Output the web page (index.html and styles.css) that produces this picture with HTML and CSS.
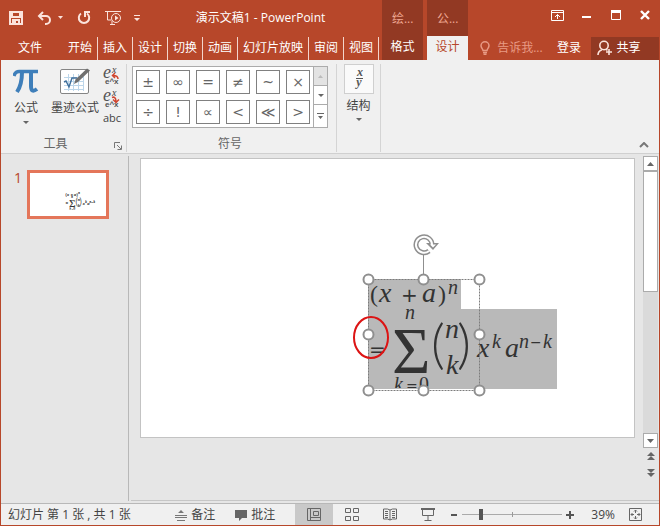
FILE: index.html
```html
<!DOCTYPE html>
<html lang="zh-CN">
<head>
    <meta charset="UTF-8">
    <meta name="viewport" content="width=device-width, initial-scale=1.0">
    <title>演示文稿1 - PowerPoint</title>
    <link rel="stylesheet" href="styles.css">
</head>
<body>
<div class="window">

    <header class="header">
        <div class="header-left">
            <div class="title-row">
                <div class="quick-access">
                    <button class="qa-button" aria-label="保存">
                        <svg width="14" height="14" viewBox="0 0 14 14" fill="none" stroke="#fbe3dc" stroke-width="2"><path d="M1 1h12v12H1zM3 1v5h8V1M4 13V9h6v4M6 10v3"/></svg>
                    </button>
                    <button class="qa-button qa-undo" aria-label="撤消">
                        <svg width="26" height="14" viewBox="0 0 26 14"><path d="M6 1L2 5l4 4M2 5h7a4 4 0 0 1 0 8H8" fill="none" stroke="#fbe3dc" stroke-width="2"/><path d="M21 5h5l-2.500 3z" fill="#fbe3dc"/></svg>
                    </button>
                    <button class="qa-button qa-redo" aria-label="重复">
                        <svg width="14" height="14" viewBox="0 0 14 14" fill="none" stroke="#fbe3dc" stroke-width="2"><path d="M4 2.500A5.200 5.200 0 1 0 10 2.500M8 6V1h5"/></svg>
                    </button>
                    <button class="qa-button qa-show" aria-label="从头开始">
                        <svg width="17" height="16" viewBox="0 0 17 16" fill="none" stroke="#fbe3dc"><path d="M0 1.500h16M2.500 2v8h4M5 14.500h5M7 11v3"/><circle cx="11" cy="8" r="4.500"/><path d="M10 5.500v5l3.500-2.500z" fill="#fbe3dc" stroke="none"/></svg>
                    </button>
                    <button class="qa-button" aria-label="自定义快速访问工具栏">
                        <svg width="6" height="7" viewBox="0 0 6 7" fill="#fbe3dc"><path d="M0 0h6v1H0zM0 3h6L3 6z"/></svg>
                    </button>
                </div>
                <h1 class="title">演示文稿1 - PowerPoint</h1>
            </div>
            <nav class="tabs">
                <a href="#" class="tab tab-file">文件</a>
                <a href="#" class="tab">开始</a>
                <a href="#" class="tab">插入</a>
                <a href="#" class="tab">设计</a>
                <a href="#" class="tab">切换</a>
                <a href="#" class="tab">动画</a>
                <a href="#" class="tab">幻灯片放映</a>
                <a href="#" class="tab">审阅</a>
                <a href="#" class="tab">视图</a>
            </nav>
        </div>
        <div class="context">
            <span class="context-name">绘...</span>
            <a href="#" class="context-tab">格式</a>
        </div>
        <div class="context">
            <span class="context-name">公...</span>
            <a href="#" class="context-tab active">设计</a>
        </div>
        <div class="header-right">
            <div class="window-buttons">
                <button aria-label="功能区显示选项">
                    <svg width="13" height="11" viewBox="0 0 13 11" fill="none" stroke="#fff"><path d="M.5.5h12v10H.5zM0 2.500h13M6.500 4.500V9M4 7l2.500-2.500L9 7"/></svg>
                </button>
                <button aria-label="最小化">
                    <svg width="10" height="10" viewBox="0 0 10 10"><path d="M0 6h9v2H0z" fill="#fff"/></svg>
                </button>
                <button aria-label="最大化">
                    <svg width="10" height="10" viewBox="0 0 10 10"><path d="M.5 1v8.500h9V1M0 1.500h10" fill="none" stroke="#fff"/><path d="M0 0h10v3H0z" fill="#fff"/></svg>
                </button>
                <button aria-label="关闭">
                    <svg width="10" height="10" viewBox="0 0 10 10"><path d="M1 1l8 8M9 1L1 9" stroke="#fff" stroke-width="2.400"/></svg>
                </button>
            </div>
            <div class="account">
                <label class="tell-me">
                    <svg width="10" height="14" viewBox="0 0 10 14" fill="none" stroke="#e89a84" stroke-width="1.500"><path d="M3 9.500C3 8 1 7 1 4.800a4 4 0 0 1 8 0C9 7 7 8 7 9.500zM3 11.500h4M3.500 13.200h3"/></svg>
                    <input type="text" placeholder="告诉我..." aria-label="告诉我">
                </label>
                <a href="#" class="sign-in">登录</a>
                <button class="share">
                    <svg width="16" height="16" viewBox="0 0 16 16" fill="none" stroke="#fbe3dc" stroke-width="1.600"><circle cx="7" cy="5.500" r="4.200"/><path d="M1 15c0-3 1.500-4.500 4-5.300M9 9.500l1.500.8M12 9v6M9 12h6"/></svg>
                    共享
                </button>
            </div>
        </div>
    </header>

    <section class="ribbon">
        <div class="group group-tools">
            <div class="group-body">
                <button class="big-button">
                    <svg width="26" height="28" viewBox="0 0 26 28" fill="none" stroke="#3f7fba"><path d="M1 9C2 5 4 4.500 6 4.500h19" stroke-width="3.500"/><path d="M9 5c0 8-1 14-5 20" stroke-width="4"/><path d="M18 5v14c0 5 2 6 6 3" stroke-width="4"/></svg>
                    公式
                    <span class="caret"></span>
                </button>
                <button class="big-button">
                    <svg width="32" height="28" viewBox="0 0 32 28" fill="none"><rect x="1.500" y="2.500" width="28" height="24" rx="1.500" fill="#fff" stroke="#858585"/><path d="M5 10.500h20M5 14.500h20M5 18.500h20M5 22.500h20M9.500 7v17M14.500 7v17M19.500 7v17M24.500 7v17" stroke="#bcd6ea"/><path d="M5 15l2-1 3 6 3-9h5" stroke="#3f6f9c" stroke-width="1.400"/><path d="M15 17l1.500-4.500L28 1.500l3 2L19 15z" fill="#6f6f6f"/></svg>
                    墨迹公式
                </button>
                <div class="small-buttons">
                    <button aria-label="专业型">
                        <svg width="18" height="23" viewBox="0 0 18 23"><text x="0" y="14" class="e-big">e</text><text x="9" y="9" class="e-sup">x</text><text x="2" y="20" class="e-line">e^x</text><path d="M15 15c0-3-2-3.500-5-3.500M12 9L9.500 11.500 12 14" fill="none" stroke="#d0452f" stroke-width="1.500"/></svg>
                    </button>
                    <button aria-label="线性">
                        <svg width="18" height="23" viewBox="0 0 18 23"><text x="0" y="14" class="e-big">e</text><text x="9" y="9" class="e-sup">x</text><text x="2" y="20" class="e-line">e^x</text><path d="M9 10.500c2-1 4 0 4 4M10 12.500l3 3 3-3" fill="none" stroke="#d0452f" stroke-width="1.500"/></svg>
                    </button>
                    <button class="abc">abc</button>
                </div>
            </div>
            <div class="group-label">工具
                <button class="launcher" aria-label="公式选项">
                    <svg width="8" height="8" viewBox="0 0 8 8" fill="none" stroke="#777"><path d="M.5 6V.5H6M3 3l4 4M7.500 3.500v4h-4"/></svg>
                </button>
            </div>
        </div>

        <div class="group group-symbols">
            <div class="group-body">
                <div class="gallery">
                    <div class="symbols">
                        <button>±</button>
                        <button>∞</button>
                        <button>=</button>
                        <button>≠</button>
                        <button>~</button>
                        <button>×</button>
                        <button>÷</button>
                        <button>!</button>
                        <button>∝</button>
                        <button>&lt;</button>
                        <button>≪</button>
                        <button>&gt;</button>
                    </div>
                    <div class="gallery-scroll">
                        <button class="off" aria-label="上一行"><svg width="5" height="3" viewBox="0 0 5 3"><path d="M0 3h5L2.500 0z" fill="#bbb"/></svg></button>
                        <button aria-label="下一行"><span class="caret"></span></button>
                        <button aria-label="其他"><svg width="7" height="7" viewBox="0 0 7 7" fill="#666"><path d="M0 0h7v1H0zM1 3h5L3.500 6z"/></svg></button>
                    </div>
                </div>
            </div>
            <div class="group-label">符号</div>
        </div>

        <div class="group group-structure">
            <div class="group-body">
                <button class="big-button">
                    <svg class="fraction" width="30" height="30" viewBox="0 0 30 30"><rect x=".5" y=".5" width="29" height="29" fill="#fafafa" stroke="#cfcfcf"/><text x="16" y="12">x</text><path d="M12 14.500h7" stroke="#555"/><text x="15" y="22">y</text></svg>
                    结构
                    <span class="caret"></span>
                </button>
            </div>
        </div>

        <button class="collapse" aria-label="折叠功能区">
            <svg width="10" height="6" viewBox="0 0 10 6"><path d="M1 5l4-4 4 4" fill="none" stroke="#777" stroke-width="2"/></svg>
        </button>
    </section>

    <main class="workspace">
        <aside class="slides">
            <span class="slide-number">1</span>
            <a href="#" class="thumb" aria-label="幻灯片 1">
                <svg class="thumb-equation" width="31" height="18" viewBox="368 279 189 112"><use href="#equation"/></svg>
            </a>
        </aside>

        <div class="editor">
            <div class="slide">
                <svg class="formula" width="210" height="170" viewBox="350 230 210 170">
                    <!-- selected text -->
                    <path d="M368 279h93v30h96v80H368z" fill="#b9b9b9"/>
                    <defs>
                        <clipPath id="box"><path d="M360 270h200v118H360z"/></clipPath>
                    </defs>
                    <g id="equation" class="equation" clip-path="url(#box)">
                        <text x="370" y="302" class="m24 upright">(</text>
                        <text x="379" y="302" class="m28">x</text>
                        <text x="401" y="302" class="m20 sign">+</text>
                        <text x="422" y="302" class="m28">a</text>
                        <text x="438" y="302" class="m24 upright">)</text>
                        <text x="448" y="294" class="m20">n</text>
                        <text x="369" y="356" class="m20 sign">=</text>
                        <text x="405" y="319" class="m20">n</text>
                        <text x="392" y="373" class="m66 upright">Σ</text>
                        <text x="394" y="391" class="m20">k</text>
                        <text x="406" y="391" class="m14 sign">=</text>
                        <text x="419" y="391" class="m20 upright">0</text>
                        <text x="431" y="363" class="m54 bracket">(</text>
                        <text x="445" y="338" class="m28">n</text>
                        <text x="446" y="374" class="m28">k</text>
                        <text x="457" y="363" class="m54 bracket">)</text>
                        <text x="477" y="357" class="m28">x</text>
                        <text x="492" y="348" class="m20">k</text>
                        <text x="505" y="357" class="m28">a</text>
                        <text x="519" y="348" class="m20">n</text>
                        <text x="530" y="347" class="m14 sign">−</text>
                        <text x="543" y="348" class="m20">k</text>
                    </g>
                    <!-- text box frame and handles -->
                    <path d="M368.500 279.500h111v111h-111z" fill="none" stroke="#7c7c7c" stroke-dasharray="2 1"/>
                    <path d="M423.500 254v20" stroke="#8f8f8f"/>
                    <path d="M432 245a8 8 0 1 0-3 6" fill="none" stroke="#8f8f8f" stroke-width="5"/>
                    <path d="M426 243h13l-6 7z" fill="#8f8f8f"/>
                    <path d="M432 245a8 8 0 1 0-3 6" fill="none" stroke="#fff" stroke-width="2"/>
                    <path d="M430 244.500h6l-3 3z" fill="#fff"/>
                    <g fill="#fff" stroke="#8f8f8f" stroke-width="2">
                        <circle cx="368.500" cy="279.500" r="5"/>
                        <circle cx="423.500" cy="279.500" r="5"/>
                        <circle cx="479.500" cy="279.500" r="5"/>
                        <circle cx="368.500" cy="334.500" r="5"/>
                        <circle cx="479.500" cy="334.500" r="5"/>
                        <circle cx="368.500" cy="390.500" r="5"/>
                        <circle cx="423.500" cy="390.500" r="5"/>
                        <circle cx="479.500" cy="390.500" r="5"/>
                    </g>
                    <ellipse cx="371" cy="337.500" rx="17" ry="20.500" fill="none" stroke="#dc1414" stroke-width="2"/>
                </svg>
            </div>
            <div class="scrollbar">
                <button class="scroll-button" aria-label="向上"><svg width="7" height="4" viewBox="0 0 7 4"><path d="M0 4h7L3.500 0z" fill="#666"/></svg></button>
                <div class="track"><div class="track-thumb"></div></div>
                <button class="scroll-button" aria-label="向下"><svg width="7" height="4" viewBox="0 0 7 4"><path d="M0 0h7L3.500 4z" fill="#666"/></svg></button>
                <button class="page-button" aria-label="上一张幻灯片"><svg width="8" height="9" viewBox="0 0 8 9"><path d="M0 4h8L4 0zM0 8h8L4 4z" fill="#666"/></svg></button>
                <button class="page-button" aria-label="下一张幻灯片"><svg width="8" height="9" viewBox="0 0 8 9"><path d="M0 0h8L4 4zM0 4h8L4 8z" fill="#666"/></svg></button>
            </div>
        </div>
    </main>

    <footer class="status">
        <span class="status-text">幻灯片 第 1 张 , 共 1 张</span>
        <button class="status-button">
            <svg width="12" height="12" viewBox="0 0 12 12" fill="#777"><path d="M3 4h6L6 1zM0 6h12v1H0zM0 8h12v1H0zM2 11h8v1H2z"/></svg>
            备注
        </button>
        <button class="status-button">
            <svg width="12" height="12" viewBox="0 0 12 12" fill="#666"><path d="M0 1h12v8H7l-3 3V9H0z"/></svg>
            批注
        </button>
        <div class="views">
            <button class="view active" aria-label="普通视图"><svg width="14" height="13" viewBox="0 0 14 13" fill="none" stroke="#666"><path d="M.5.500h13v12H.5zM3.500 1v11M6.500 3.500h5v4h-5zM4 9.500h9"/></svg></button>
            <button class="view" aria-label="幻灯片浏览"><svg width="14" height="13" viewBox="0 0 14 13" fill="none" stroke="#666"><path d="M.5.500h5v4h-5zM8.500.500h5v4h-5zM.5 8.500h5v4h-5zM8.500 8.500h5v4h-5z"/></svg></button>
            <button class="view" aria-label="阅读视图"><svg width="14" height="13" viewBox="0 0 14 13" fill="none" stroke="#666"><path d="M.5 1h4l2.500 1 2.500-1h4v10h-4L7 12l-2.500-1h-4zM7 2v10M2 3.500h3M2 5.500h3M2 7.500h3M2 9.500h3M9 3.500h3M9 5.500h3M9 7.500h3M9 9.500h3"/></svg></button>
            <button class="view" aria-label="幻灯片放映"><svg width="14" height="13" viewBox="0 0 14 13" fill="none" stroke="#666"><path d="M0 1h14" stroke-width="2"/><path d="M1.500 2v5.500h11V2M7 8v4M3.500 12.500h7"/></svg></button>
        </div>
        <div class="zoom">
            <button aria-label="缩小"><svg width="8" height="8" viewBox="0 0 8 8"><path d="M1 3h6v2H1z" fill="#555"/></svg></button>
            <input type="range" class="zoom-range" min="0" max="100" value="17" aria-label="显示比例">
            <button aria-label="放大"><svg width="8" height="8" viewBox="0 0 8 8"><path d="M0 3h8v2H0zM3 0h2v8H3z" fill="#555"/></svg></button>
        </div>
        <button class="percent">39%</button>
        <button class="fit" aria-label="使幻灯片适应当前窗口"><svg width="13" height="13" viewBox="0 0 13 13" fill="none" stroke="#666"><path d="M.5.500h12v12H.5zM6.500 2v3M5 3.500l1.500-1.500L8 3.500M6.500 11V8M5 9.500L6.500 11 8 9.500M2 6.500h3M3.500 5L2 6.500 3.500 8M11 6.500H8M9.500 5L11 6.500 9.500 8"/></svg></button>
    </footer>

</div>
</body>
</html>
```
FILE: styles.css
```css
* {
    box-sizing: border-box;
}

body {
    margin: 0;
    font-family: "Open Sans", "Noto Sans CJK SC", sans-serif;
    font-size: 12px;
    line-height: 16px;
    color: #444;
}

button {
    display: flex;
    align-items: center;
    justify-content: center;
    margin: 0;
    padding: 0;
    border: none;
    background: none;
    font: inherit;
    color: inherit;
}

a {
    color: inherit;
    text-decoration: none;
}

svg {
    display: block;
    flex: none;
}

.window {
    display: flex;
    flex-direction: column;
    min-height: 100vh;
    background: #e6e6e6;
    border: 1px solid #b7472a;
    border-top: none;
}

/* title bar and tabs */
.header {
    display: flex;
    background: #b7472a;
    color: #fff;
}

.header-left {
    flex: none;
    margin-right: 3px;
}

.title-row {
    display: flex;
    align-items: center;
    height: 36px;
}

.quick-access {
    display: flex;
    align-items: center;
    width: 141px;
    height: 30px;
    padding-left: 8px;
}

.qa-undo {
    margin-left: 14px;
}

.qa-redo {
    margin-left: 14px;
}

.qa-show {
    margin: 0 12px 0 14px;
}

.title {
    flex: 1;
    margin: 0;
    font-size: 12px;
    font-weight: normal;
    line-height: 18px;
    text-align: center;
}

.tabs {
    display: flex;
    align-items: center;
    height: 24px;
}

.tab {
    height: 23px;
    padding: 0 5px;
    border-right: 1px solid #f3d5cc;
    line-height: 22px;
}

.tab-file {
    width: 62px;
    padding-left: 17px;
    border-right: none;
}

.context {
    display: flex;
    flex-direction: column;
    width: 41px;
    margin-right: 4px;
    background: #923923;
    text-align: center;
}

.context-name {
    height: 36px;
    line-height: 38px;
    color: #efa792;
}

.context-tab {
    height: 24px;
    line-height: 22px;
}

.context-tab.active {
    background: #f0f0f0;
    color: #b7472a;
}

.header-right {
    flex: 1;
    min-width: 0;
}

.window-buttons {
    display: flex;
    justify-content: flex-end;
    height: 36px;
    padding-bottom: 6px;
}

.window-buttons button {
    width: 29px;
}

.account {
    display: flex;
    align-items: center;
    height: 24px;
    padding-left: 8px;
}

.tell-me {
    display: flex;
    flex: 1;
    align-items: center;
    gap: 7px;
    min-width: 0;
}

.tell-me input {
    width: 100%;
    min-width: 0;
    padding: 0;
    border: none;
    outline: none;
    background: none;
    font: inherit;
    color: #fff;
}

.tell-me input::placeholder {
    color: #e89a84;
}

.sign-in {
    margin: 0 10px;
}

.share {
    gap: 3px;
    width: 68px;
    height: 23px;
    padding-right: 12px;
    background: #923923;
}

/* ribbon */
.ribbon {
    display: flex;
    height: 94px;
    padding: 4px 0 1px;
    background: #f0f0f0;
    border-bottom: 1px solid #d0d0d0;
}

.group {
    display: flex;
    flex-direction: column;
    justify-content: space-between;
    border-right: 1px solid #d4d4d4;
}

.group-body {
    display: flex;
    align-items: flex-start;
}

.group-tools {
    width: 126px;
}

.group-tools .group-body {
    gap: 12px;
    padding-left: 12px;
}

.big-button {
    flex-direction: column;
    justify-content: flex-start;
    gap: 4px;
    width: 26px;
    line-height: 16px;
    white-space: nowrap;
}

.group-tools .big-button + .big-button {
    width: 48px;
}

.group-tools .big-button {
    gap: 5px;
    padding-top: 3px;
}

.caret {
    border: 3px solid transparent;
    border-top-color: #666;
    border-bottom: none;
}

.small-buttons {
    display: flex;
    flex-direction: column;
    align-items: center;
    margin-left: -8px;
}

.abc {
    line-height: 16px;
    font-size: 11px;
}

.e-big {
    font: italic 18px "Liberation Serif", serif;
    fill: #555;
}

.e-sup {
    font: italic 10px "Liberation Serif", serif;
    fill: #444;
}

.e-line {
    font: bold 8px "Liberation Sans", sans-serif;
    fill: #555;
}

.group-label {
    position: relative;
    text-align: center;
    line-height: 16px;
    color: #666;
}

.group-tools .group-label {
    padding-right: 16px;
}

.launcher {
    position: absolute;
    right: 4px;
    bottom: 2px;
}

.group-symbols {
    width: 210px;
    padding: 2px 8px 0 5px;
}

.gallery {
    display: flex;
    background: #fff;
    border: 1px solid #ababab;
}

.symbols {
    display: grid;
    grid-template-columns: repeat(6, 24px);
    gap: 6px;
    padding: 3px;
}

.symbols button {
    height: 24px;
    border: 1px solid #808080;
    font-family: "DejaVu Sans", sans-serif;
    font-size: 14px;
    color: #666;
}

.gallery-scroll {
    display: grid;
    width: 14px;
    border-left: 1px solid #ababab;
}

.gallery-scroll button + button {
    border-top: 1px solid #ababab;
}

.gallery-scroll .off {
    background: #e3e3e3;
}

.group-structure {
    width: 44px;
}

.group-structure .group-body {
    justify-content: center;
}

.fraction text {
    font: italic bold 12px "Liberation Serif", serif;
    text-anchor: middle;
    fill: #555;
}

.collapse {
    align-self: flex-end;
    margin: 0 10px 4px auto;
}

/* slides and editor */
.workspace {
    display: flex;
    flex: 1;
    padding: 2px 0;
}

.slides {
    display: flex;
    align-items: flex-start;
    gap: 5px;
    width: 128px;
    padding: 14px 0 0 13px;
    border-right: 1px solid #b8b8b8;
}

.slide-number {
    width: 8px;
    font-size: 14px;
    color: #b7472a;
}

.thumb {
    width: 82px;
    height: 49px;
    padding: 19px 0 0 35px;
    background: #fff;
    border: 3px solid #e4765a;
}

.thumb-equation {
    stroke: #333;
    stroke-width: 1px;
}

.editor {
    display: flex;
    flex: 1;
    align-items: flex-start;
    gap: 8px;
    margin-left: 2px;
    padding: 0 1px 0 9px;
    border-bottom: 1px solid #c6c6c6;
}

.slide {
    position: relative;
    flex: 1;
    aspect-ratio: 495 / 280;
    margin-top: 2px;
    background: #fff;
    border: 1px solid #c3c3c3;
}

.formula {
    position: absolute;
    left: 209px;
    top: 71px;
}

.equation {
    font-family: "Liberation Serif", serif;
    font-style: italic;
    fill: #333;
}

.upright {
    font-style: normal;
}

.sign {
    font-family: "DejaVu Sans", sans-serif;
    font-style: normal;
}

.bracket {
    font-family: Lato, sans-serif;
    font-style: normal;
    font-weight: 300;
}

.m14 { font-size: 14px; }
.m20 { font-size: 20px; }
.m24 { font-size: 24px; }
.m28 { font-size: 28px; }
.m54 { font-size: 54px; }
.m66 { font-size: 66px; }

.scrollbar {
    display: flex;
    flex-direction: column;
    align-self: stretch;
    width: 15px;
    padding-bottom: 18px;
}

.scroll-button {
    height: 15px;
    background: #fff;
    border: 1px solid #ababab;
}

.track {
    flex: 1;
    background: #dadada;
}

.track-thumb {
    height: 46%;
    background: #fff;
    border: 1px solid #ababab;
}

.page-button {
    height: 17px;
}

/* status bar */
.status {
    display: flex;
    align-items: center;
    height: 22px;
    padding-right: 17px;
    background: #f0f0f0;
    border-top: 1px solid #b8b8b8;
}

.status-text {
    flex: 1;
    padding-left: 7px;
    white-space: nowrap;
}

.status-button {
    gap: 4px;
    margin-right: 20px;
}

.views {
    display: flex;
    align-self: stretch;
}

.view {
    width: 38px;
}

.view.active {
    background: #c9c9c9;
}

.zoom {
    display: flex;
    align-items: center;
    gap: 4px;
    margin-left: 3px;
}

.zoom-range {
    appearance: none;
    width: 100px;
    height: 11px;
    margin: 0;
    background:
        linear-gradient(#999, #999) center / 1px 5px no-repeat,
        linear-gradient(#aaa, #aaa) center / 100% 1px no-repeat;
}

.zoom-range::-webkit-slider-thumb {
    appearance: none;
    width: 4px;
    height: 11px;
    background: #555;
}

.percent {
    margin: 0 14px 0 17px;
}
```
